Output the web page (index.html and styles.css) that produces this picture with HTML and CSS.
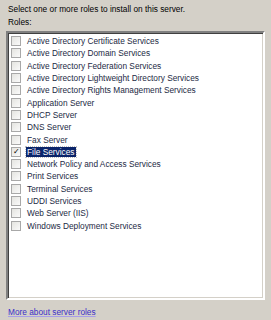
FILE: index.html
```html
<!DOCTYPE html>
<html lang="en">
<head>
    <meta charset="UTF-8">
    <title>Select Server Roles</title>
    <link rel="stylesheet" href="styles.css">
</head>
<body>
<div class="page">
    <p class="intro">Select one or more roles to install on this server.</p>
    <p class="label">Roles:</p>
    <ul class="roles">
        <li><span class="box"></span><span class="name">Active Directory Certificate Services</span></li>
        <li><span class="box"></span><span class="name">Active Directory Domain Services</span></li>
        <li><span class="box"></span><span class="name">Active Directory Federation Services</span></li>
        <li><span class="box"></span><span class="name">Active Directory Lightweight Directory Services</span></li>
        <li><span class="box"></span><span class="name">Active Directory Rights Management Services</span></li>
        <li><span class="box"></span><span class="name">Application Server</span></li>
        <li><span class="box"></span><span class="name">DHCP Server</span></li>
        <li><span class="box"></span><span class="name">DNS Server</span></li>
        <li><span class="box"></span><span class="name">Fax Server</span></li>
        <li class="checked"><span class="box">&#10003;</span><span class="name selected">File Services</span></li>
        <li><span class="box"></span><span class="name">Network Policy and Access Services</span></li>
        <li><span class="box"></span><span class="name">Print Services</span></li>
        <li><span class="box"></span><span class="name">Terminal Services</span></li>
        <li><span class="box"></span><span class="name">UDDI Services</span></li>
        <li><span class="box"></span><span class="name">Web Server (IIS)</span></li>
        <li><span class="box"></span><span class="name">Windows Deployment Services</span></li>
    </ul>
    <a class="more" href="#">More about server roles</a>
</div>
</body>
</html>
```

FILE: styles.css
```css
body {
    margin: 0;
    background-color: #d4d0c8;
    font-family: "Liberation Sans", Arial, sans-serif;
    font-size: 8.3px;
    color: #000;
}

.page {
    padding: 4px 6px 0 6px;
}

.intro {
    margin: 0 0 0 2px;
    line-height: 10px;
}

.label {
    margin: 3px 0 0 2px;
    line-height: 10px;
}

.roles {
    list-style: none;
    margin: 4px 0 0 0;
    padding: 2px 0 0 3px;
    height: 263px;
    background-color: #fff;
    border: 2px solid;
    border-color: #808080 #fff #fff #808080;
    box-shadow: inset 1px 1px 0 #404040, inset -1px -1px 0 #d4d0c8;
}

.roles li {
    display: flex;
    align-items: center;
    height: 12.3px;
}

.box {
    box-sizing: border-box;
    width: 10px;
    height: 10px;
    margin-right: 5px;
    border: 1px solid #a8a8a8;
    background: linear-gradient(135deg, #e4e4e0, #fafafa);
    font-size: 8px;
    line-height: 8px;
    text-align: center;
}

.name {
    padding: 0 1px;
    line-height: 10px;
    color: #1c2a44;
}

.selected {
    background-color: #0a246a;
    color: #fff;
    outline: 1px dotted #c0c0c0;
}

.more {
    display: block;
    margin: 7px 0 0 2px;
    color: #3a2fc9;
    text-decoration-color: #a89ee8;
}
```
